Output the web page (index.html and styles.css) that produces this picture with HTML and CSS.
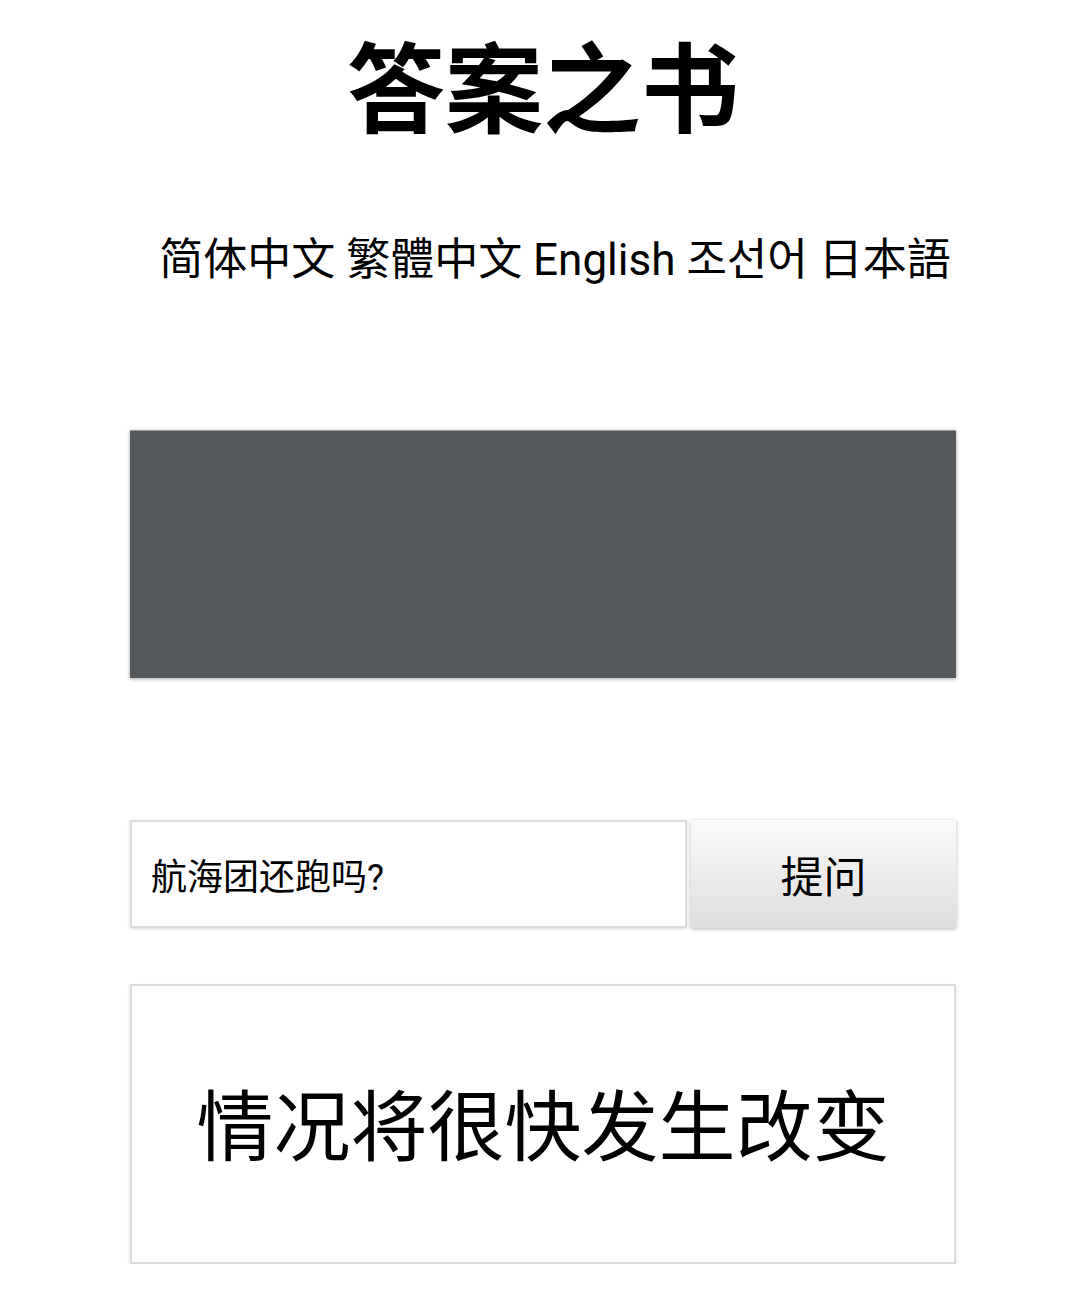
FILE: index.html
```html
<!DOCTYPE html>
<html lang="zh-CN">
<head>
<meta charset="utf-8">
<link rel="stylesheet" href="styles.css">
</head>
<body>
<div class="page">
  <h1 class="title">答案之书</h1>
  <nav class="langs">
    <span>简体中文</span> <span>繁體中文</span> <span>English</span> <span class="ko">조선어</span> <span>日本語</span>
  </nav>
  <div class="book"></div>
  <div class="ask">
    <div class="input">航海团还跑吗?</div>
    <div class="btn">提问</div>
  </div>
  <div class="answer">情况将很快发生改变</div>
</div>
</body>
</html>
```
FILE: styles.css
```css
html, body { margin: 0; padding: 0; background: #fff; }
body { font-family: Roboto, "Noto Sans CJK SC", "Noto Sans CJK KR", sans-serif; color: #000; }
.page { width: 826px; margin-left: 130px; display: flex; flex-direction: column; }
.title { margin: 20px 0 0; font-family: "Noto Sans CJK SC", sans-serif; font-size: 98px; font-weight: 700; line-height: 124px; text-align: center; }
.langs { margin-top: 84px; font-size: 44px; line-height: 56px; text-align: center; padding-left: 24px; white-space: nowrap; }
.ko { font-family: "Noto Sans CJK KR", sans-serif; }
.book { margin-top: 142px; height: 247px; background: #55585b; border-top: 1px solid #9a9c9e; box-shadow: 0 1px 4px rgba(0,0,0,0.35); }
.ask { margin-top: 142px; display: flex; gap: 4px; height: 108px; }
.input { flex: 0 0 557px; box-sizing: border-box; border: 2px solid #dcdcdc; background: #fff; font-size: 36px; padding-left: 19px; display: flex; align-items: center; box-shadow: 0 1px 3px rgba(0,0,0,0.15); }
.btn { flex: 1; background: linear-gradient(#fafafa, #dedede); font-size: 43px; display: flex; align-items: center; justify-content: center; box-shadow: 0 1px 4px rgba(0,0,0,0.3); }
.answer { margin-top: 56px; height: 280px; box-sizing: border-box; border: 2px solid #dcdcdc; font-size: 77px; display: flex; align-items: center; justify-content: center; padding-bottom: 6px; box-shadow: 0 2px 3px rgba(0,0,0,0.15); }
```
